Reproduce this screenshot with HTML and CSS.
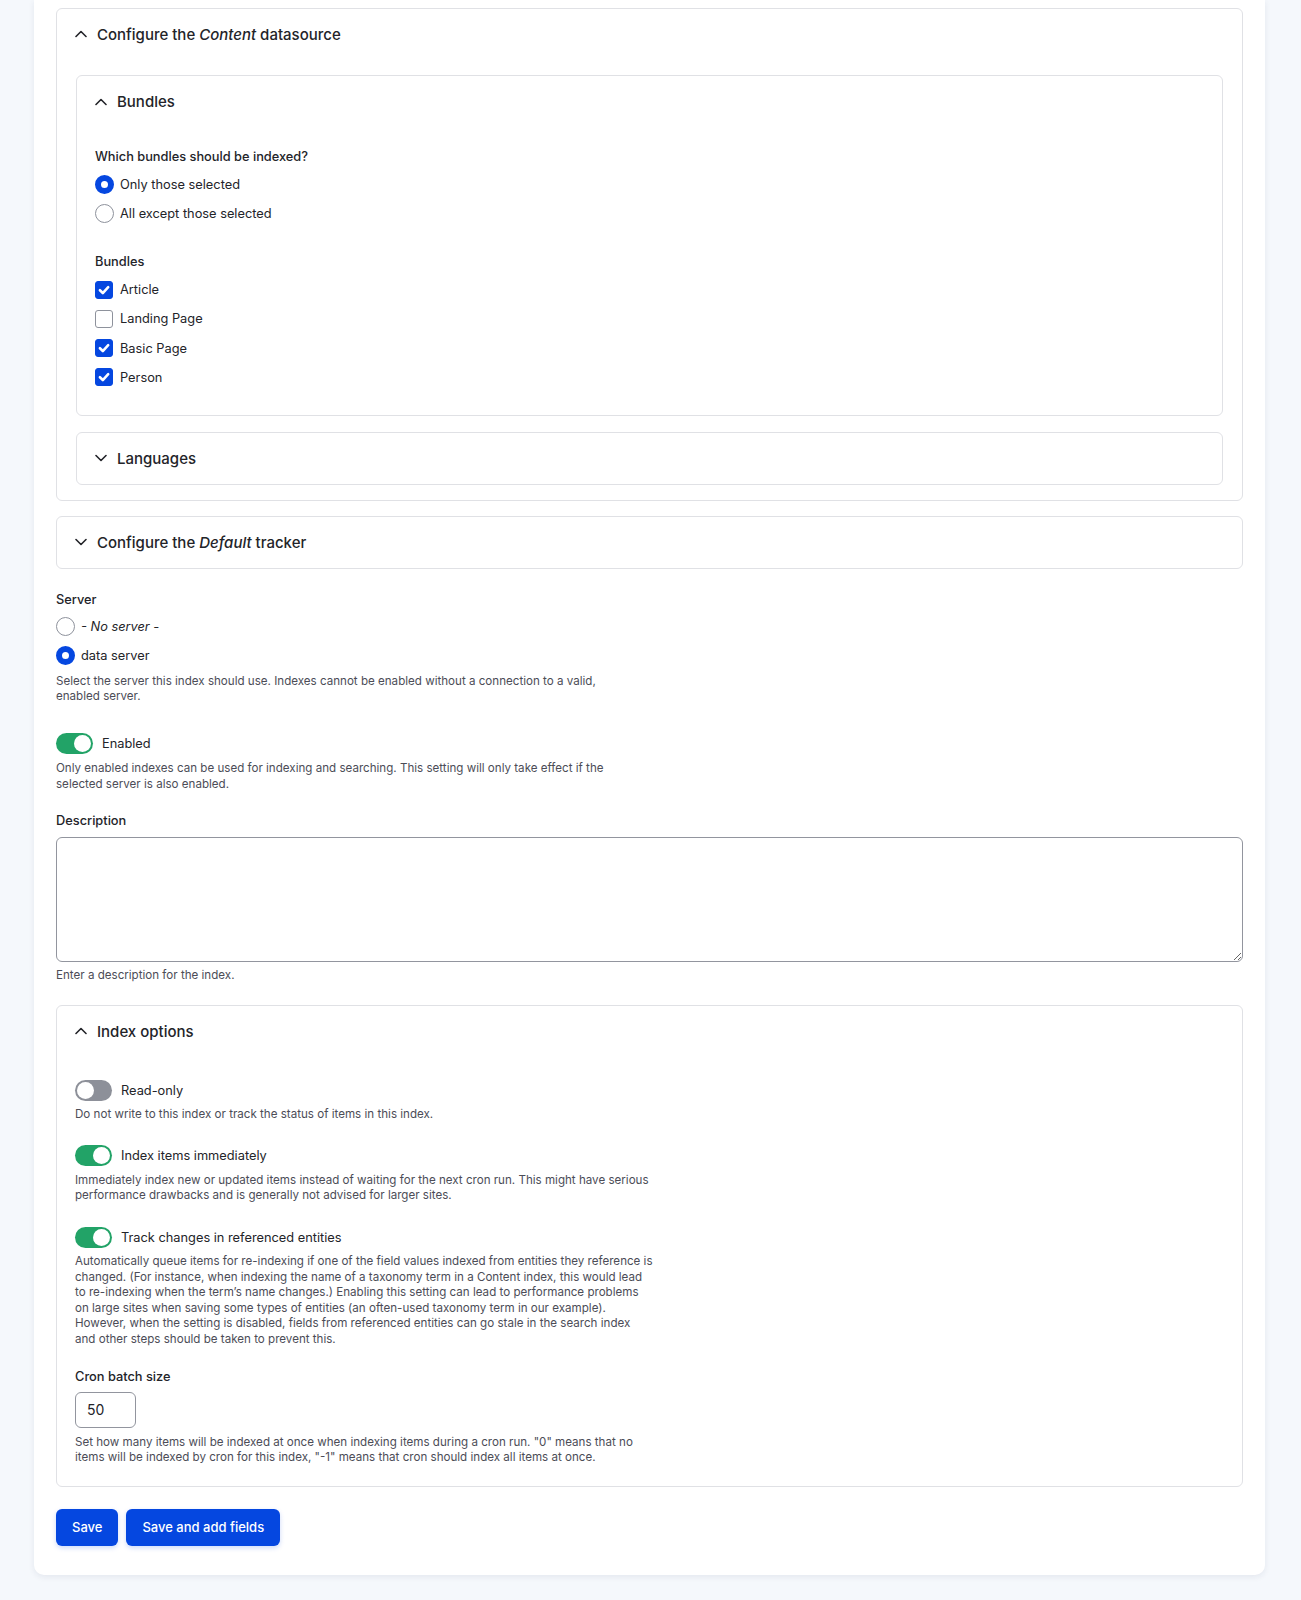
FILE: index.html
```html
<!DOCTYPE html>
<html lang="en">
<head>
<meta charset="utf-8">
<title>Edit search index</title>
<link rel="stylesheet" href="styles.css">
</head>
<body>
<div class="card">
  <form class="form">
    <section class="fs fs-outer">
      <div class="summary"><svg class="chev" viewBox="0 0 12 8"><path d="M1 6.5 6 1.5l5 5"/></svg><span>Configure the <em>Content</em> datasource</span></div>
      <div class="fs-body">
        <section class="fs">
          <div class="summary"><svg class="chev" viewBox="0 0 12 8"><path d="M1 6.5 6 1.5l5 5"/></svg><span>Bundles</span></div>
          <div class="fs-body bundles">
            <div class="group">
              <div class="label">Which bundles should be indexed?</div>
              <div class="opts">
                <div class="opt"><span class="radio on"></span><span>Only those selected</span></div>
                <div class="opt"><span class="radio"></span><span>All except those selected</span></div>
              </div>
            </div>
            <div class="group g2">
              <div class="label">Bundles</div>
              <div class="opts">
                <div class="opt"><span class="check on"><svg viewBox="0 0 12 12"><path d="M2.5 6.2 5 8.6l4.6-5"/></svg></span><span>Article</span></div>
                <div class="opt"><span class="check"></span><span>Landing Page</span></div>
                <div class="opt"><span class="check on"><svg viewBox="0 0 12 12"><path d="M2.5 6.2 5 8.6l4.6-5"/></svg></span><span>Basic Page</span></div>
                <div class="opt"><span class="check on"><svg viewBox="0 0 12 12"><path d="M2.5 6.2 5 8.6l4.6-5"/></svg></span><span>Person</span></div>
              </div>
            </div>
          </div>
        </section>
        <section class="fs closed">
          <div class="summary"><svg class="chev" viewBox="0 0 12 8"><path d="M1 1.5 6 6.5l5-5"/></svg><span>Languages</span></div>
        </section>
      </div>
    </section>

    <section class="fs closed tracker">
      <div class="summary"><svg class="chev" viewBox="0 0 12 8"><path d="M1 1.5 6 6.5l5-5"/></svg><span>Configure the <em>Default</em> tracker</span></div>
    </section>

    <div class="item server">
      <div class="label">Server</div>
      <div class="opts">
        <div class="opt"><span class="radio"></span><span><em>- No server -</em></span></div>
        <div class="opt"><span class="radio on"></span><span>data server</span></div>
      </div>
      <p class="desc">Select the server this index should use. Indexes cannot be enabled without a connection to a valid, enabled server.</p>
    </div>

    <div class="item toggle-item enabled">
      <div class="opt"><span class="toggle on"></span><span>Enabled</span></div>
      <p class="desc">Only enabled indexes can be used for indexing and searching. This setting will only take effect if the selected server is also enabled.</p>
    </div>

    <div class="item descr">
      <div class="label">Description</div>
      <textarea class="textarea"></textarea>
      <p class="desc">Enter a description for the index.</p>
    </div>

    <section class="fs options">
      <div class="summary"><svg class="chev" viewBox="0 0 12 8"><path d="M1 6.5 6 1.5l5 5"/></svg><span>Index options</span></div>
      <div class="fs-body opt-body">
        <div class="item toggle-item">
          <div class="opt"><span class="toggle"></span><span>Read-only</span></div>
          <p class="desc">Do not write to this index or track the status of items in this index.</p>
        </div>
        <div class="item toggle-item">
          <div class="opt"><span class="toggle on"></span><span>Index items immediately</span></div>
          <p class="desc">Immediately index new or updated items instead of waiting for the next cron run. This might have serious performance drawbacks and is generally not advised for larger sites.</p>
        </div>
        <div class="item toggle-item">
          <div class="opt"><span class="toggle on"></span><span>Track changes in referenced entities</span></div>
          <p class="desc">Automatically queue items for re-indexing if one of the field values indexed from entities they reference is changed. (For instance, when indexing the name of a taxonomy term in a Content index, this would lead to re-indexing when the term’s name changes.) Enabling this setting can lead to performance problems on large sites when saving some types of entities (an often-used taxonomy term in our example). However, when the setting is disabled, fields from referenced entities can go stale in the search index and other steps should be taken to prevent this.</p>
        </div>
        <div class="item cron">
          <div class="label">Cron batch size</div>
          <input class="num" type="text" value="50">
          <p class="desc">Set how many items will be indexed at once when indexing items during a cron run. "0" means that no items will be indexed by cron for this index, "-1" means that cron should index all items at once.</p>
        </div>
      </div>
    </section>

    <div class="actions">
      <button type="button" class="btn">Save</button>
      <button type="button" class="btn">Save and add fields</button>
    </div>
  </form>
</div>
</body>
</html>
```

FILE: styles.css
```css
html, body {
  margin: 0;
  padding: 0;
}
body {
  background: #f5f8fc;
  font-family: Inter, "Noto Sans", sans-serif;
  color: #232429;
  padding: 0 36px 25px 34px;
}
.card {
  background: #fff;
  border-radius: 0 0 10px 10px;
  box-shadow: 0 2px 6px rgba(30, 40, 80, 0.08);
  padding: 8px 22px 29px 22px;
}
.form {
  display: flex;
  flex-direction: column;
}
.fs {
  border: 1px solid #e0e1e5;
  border-radius: 6px;
  background: #fff;
}
.summary {
  height: 51px;
  display: flex;
  align-items: center;
  padding: 0 18px;
  gap: 10px;
  font-size: 15px;
  font-weight: 500;
}
.fs-outer > .summary {
  height: 50px;
}
.summary em {
  font-style: italic;
}
.chev {
  width: 12px;
  height: 8px;
  fill: none;
  stroke: #232429;
  stroke-width: 1.6;
  stroke-linecap: round;
  stroke-linejoin: round;
  flex: none;
}
.fs-body {
  padding: 16px 19px 15px 19px;
  display: flex;
  flex-direction: column;
  gap: 16px;
}
.bundles {
  padding: 21px 18px 28px 18px;
  gap: 30px;
}
.label {
  font-size: 12.8px;
  font-weight: 500;
  line-height: 18px;
}
.opts {
  display: flex;
  flex-direction: column;
  gap: 10.2px;
  margin-top: 9px;
}
.server .opts {
  margin-top: 8px;
  gap: 10px;
}
.opt {
  display: flex;
  align-items: center;
  gap: 6px;
  font-size: 12.8px;
  line-height: 19px;
  height: 19px;
}
.opt em {
  font-style: italic;
}
.radio {
  width: 19px;
  height: 19px;
  box-sizing: border-box;
  border: 1px solid #8e929c;
  border-radius: 50%;
  flex: none;
  background: #fff;
}
.radio.on {
  border: 6px solid #0547e0;
}
.check {
  width: 18px;
  height: 18px;
  box-sizing: border-box;
  border: 1px solid #8e929c;
  border-radius: 3px;
  flex: none;
  margin: 0 1px 0 0;
  display: flex;
  align-items: center;
  justify-content: center;
}
.check.on {
  background: #0547e0;
  border-color: #0547e0;
}
.check svg {
  width: 14px;
  height: 14px;
  fill: none;
  stroke: #fff;
  stroke-width: 2.2;
  stroke-linecap: round;
  stroke-linejoin: round;
}
.tracker {
  margin-top: 15px;
}
.desc {
  margin: 0;
  font-size: 11.6px;
  line-height: 15.6px;
  color: #4c4d57;
  max-width: 578px;
}
.item {
  display: flex;
  flex-direction: column;
}
.server {
  margin-top: 22px;
}
.server .desc {
  margin-top: 9px;
}
.toggle-item .opt {
  height: 21px;
}
.toggle-item .desc {
  margin-top: 6.5px;
}
.enabled .desc {
  margin-top: 7px;
}
.enabled {
  margin-top: 28px;
}
.toggle {
  width: 37px;
  height: 21px;
  border-radius: 11px;
  background: #8d9099;
  position: relative;
  flex: none;
  margin-right: 3px;
}
.toggle::after {
  content: "";
  position: absolute;
  top: 2px;
  left: 2px;
  width: 17px;
  height: 17px;
  border-radius: 50%;
  background: #fff;
}
.toggle.on {
  background: #22a367;
}
.toggle.on::after {
  left: 18px;
}
.descr {
  margin-top: 20px;
}
.textarea {
  margin-top: 7px;
  display: block;
  box-sizing: border-box;
  width: 100%;
  height: 125px;
  border: 1px solid #92959e;
  border-radius: 6px;
  resize: vertical;
  font-family: inherit;
}
.descr .desc {
  margin-top: 6px;
}
.options {
  margin-top: 21px;
}
.opt-body {
  padding: 23px 18px 20px 18px;
  gap: 26px;
}
.opt-body .toggle-item + .toggle-item {
  margin-top: -3.5px;
}
.cron {
  margin-top: -6px;
}
.num {
  margin-top: 6px;
  width: 61px;
  height: 36px;
  box-sizing: border-box;
  border: 1px solid #92959e;
  border-radius: 6px;
  padding: 0 11px;
  font-family: inherit;
  font-size: 14px;
  color: #232429;
}
.cron .desc {
  margin-top: 7px;
}
.actions {
  display: flex;
  gap: 8px;
  margin-top: 22px;
}
.btn {
  height: 37px;
  border: none;
  border-radius: 6px;
  background: #0547e0;
  color: #fff;
  font-family: inherit;
  font-size: 13px;
  font-weight: 500;
  padding: 0 16px;
  box-shadow: 0 2px 5px rgba(5, 71, 224, 0.2);
}
```
